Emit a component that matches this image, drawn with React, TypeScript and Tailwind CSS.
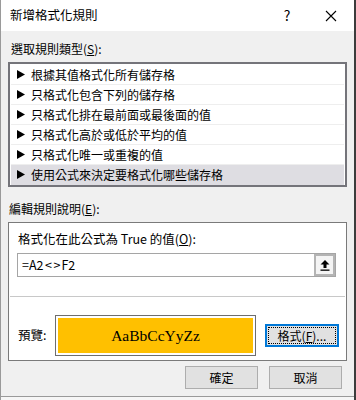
import React from "react";

const rules = [
  "根據其值格式化所有儲存格",
  "只格式化包含下列的儲存格",
  "只格式化排在最前面或最後面的值",
  "只格式化高於或低於平均的值",
  "只格式化唯一或重複的值",
  "使用公式來決定要格式化哪些儲存格",
];

const font = {
  fontFamily: '"Noto Sans CJK TC", "Noto Sans", sans-serif',
};

const App = () => {
  return (
    <div
      className="w-[356px] h-[400px] bg-[#f0f0f0] border-l border-[#9a9a9a] border-r-2 border-r-[#3c3c3c] flex flex-col text-[12px] text-black overflow-hidden"
      style={font}
    >
      {/* 標題列 */}
      <div className="h-[31px] bg-white flex items-center shrink-0">
        <span className="ml-[9px] flex-1 text-[12.5px]">新增格式化規則</span>
        <span className="w-[16px] text-center text-[14px] mr-[30px]">?</span>
        <svg width="12" height="12" viewBox="0 0 12 12" className="mr-[17px]">
          <path d="M1 1 L11 11 M11 1 L1 11" stroke="#000" strokeWidth="1.1" />
        </svg>
      </div>

      <div className="px-[7px] flex flex-col flex-1">
        <div className="mt-[10px] ml-[3px] h-[16px] leading-[16px]">
          選取規則類型(<span className="underline">S</span>):
        </div>

        {/* 規則類型清單 */}
        <div className="mt-[5px] h-[125px] border-2 border-[#74747a] bg-white p-[1px] flex flex-col">
          {rules.map((r, i) => (
            <div
              key={r}
              className={
                "h-[20px] flex items-center shrink-0 border-b " +
                (i === 5
                  ? "bg-[#dedde2] border-transparent"
                  : "border-[#eeeeee]")
              }
            >
              <svg width="8" height="9" viewBox="0 0 8 9" className="ml-[6px] mr-[6px]">
                <path d="M0 0 L8 4.5 L0 9 Z" fill="#000" />
              </svg>
              <span>{r}</span>
            </div>
          ))}
        </div>

        <div className="mt-[14px] ml-[1px] h-[16px] leading-[16px]">
          編輯規則說明(<span className="underline">E</span>):
        </div>

        {/* 規則說明 */}
        <div className="mt-[5px] h-[139px] border border-[#7a7a7a] bg-white flex flex-col">
          <div className="mt-[8px] ml-[9px] h-[16px] leading-[16px] text-[12.5px]">
            格式化在此公式為 True 的值(<span className="underline">O</span>):
          </div>
          <div className="mt-[6px] ml-[8px] mr-[10px] h-[24px] border border-[#a5a5a5] flex">
            <div className="flex-1 flex items-center pl-[4px] text-[12.5px]">
              =A2<span className="mx-[1.5px]">&lt;</span>
              <span className="mr-[1px]">&gt;</span>F2
            </div>
            <div className="w-[21px] border-2 border-[#b4b4b4] bg-[#f4f4f4] flex items-center justify-center">
              <svg width="10" height="11" viewBox="0 0 10 11">
                <path d="M5 0 L9.5 4.5 L6.5 4.5 L6.5 8 L3.5 8 L3.5 4.5 L0.5 4.5 Z" fill="#000" />
                <rect x="0.5" y="9.5" width="9" height="1.3" fill="#000" />
              </svg>
            </div>
          </div>
          <div className="mt-[19px] mx-[1px] h-px bg-[#c8c8c8]" />

          <div className="mt-[18px] flex items-center">
            <span className="ml-[9px] w-[37px] text-[12.5px]">預覽:</span>
            <div className="w-[201px] h-[41px] border border-[#6e6e6e] p-[2px] bg-white">
              <div
                className="w-full h-full bg-[#ffc000] flex items-center justify-center text-[15.5px]"
                style={{ fontFamily: '"Liberation Serif", serif' }}
              >
                AaBbCcYyZz
              </div>
            </div>
            <button className="ml-[9px] w-[74px] h-[23px] border-2 border-[#0078d7] bg-[#e1e1e1] p-[1px]">
              <div className="w-full h-full border border-dotted border-black flex items-center justify-center leading-none">
                格式(<span className="underline">F</span>)...
              </div>
            </button>
          </div>
        </div>

        {/* 按鈕 */}
        <div className="mt-[5px] flex justify-end gap-[11px] pr-[5px]">
          <button className="w-[73px] h-[23px] border border-[#adadad] bg-[#e1e1e1] flex items-center justify-center">
            確定
          </button>
          <button className="w-[73px] h-[23px] border border-[#adadad] bg-[#e1e1e1] flex items-center justify-center">
            取消
          </button>
        </div>
      </div>
      <div className="h-[4px] border-t border-[#9a9a9a] bg-[#f6f6f6] shrink-0" />
    </div>
  );
};

export default App;
